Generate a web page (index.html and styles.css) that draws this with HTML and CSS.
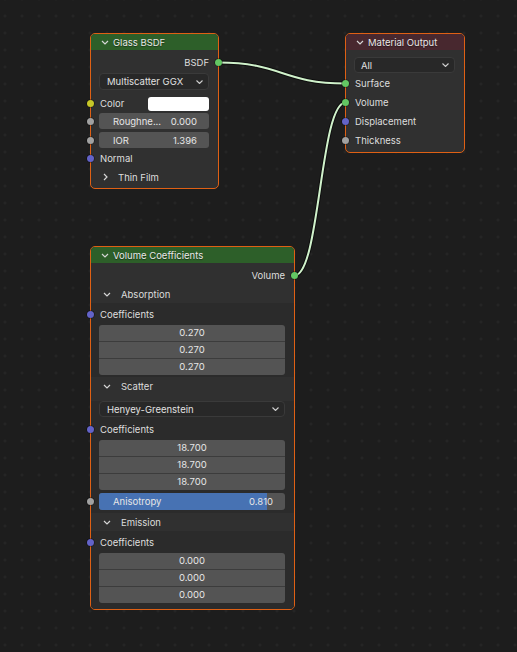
FILE: index.html
```html
<!DOCTYPE html>
<html lang="en">
<head>
    <meta charset="UTF-8">
    <meta name="viewport" content="width=device-width, initial-scale=1.0">
    <title>Shader Editor</title>
    <link rel="stylesheet" href="styles.css">
</head>
<body>
    <div class="canvas">
        <svg class="links" width="517" height="652" viewBox="0 0 517 652">
            <path class="link-shadow" d="M218.5 62.5 C282 62.5 282 83.5 345.5 83.5" />
            <path class="link" d="M218.5 62.5 C282 62.5 282 83.5 345.5 83.5" />
            <path class="link-shadow" d="M294.5 275.5 C320 275.5 320 102.5 345.5 102.5" />
            <path class="link" d="M294.5 275.5 C320 275.5 320 102.5 345.5 102.5" />
        </svg>

        <!-- Glass BSDF -->
        <div class="node node-glass">
            <div class="node-header shader">
                <svg class="chev" width="8" height="5" viewBox="0 0 8 5"><polyline points="1,1 4,4 7,1" /></svg>
                <span>Glass BSDF</span>
            </div>
            <div class="node-body">
                <div class="row row-out">BSDF<span class="socket out green"></span></div>
                <div class="select select-glass"><span>Multiscatter GGX</span><svg width="7" height="4" viewBox="0 0 7 4"><polyline points="0.5,0.5 3.5,3.5 6.5,0.5" /></svg></div>
                <div class="row row-color"><span class="socket yellow"></span>Color<span class="swatch"></span></div>
                <div class="row field-row"><span class="socket gray"></span><div class="field"><span>Roughne...</span><span>0.000</span></div></div>
                <div class="row field-row gap3"><span class="socket gray"></span><div class="field"><span>IOR</span><span>1.396</span></div></div>
                <div class="row row-normal"><span class="socket blue"></span>Normal</div>
                <div class="row row-panel">
                    <svg class="chev" width="5" height="8" viewBox="0 0 5 8"><polyline points="1,1 4,4 1,7" /></svg>
                    <span>Thin Film</span>
                </div>
            </div>
        </div>

        <!-- Material Output -->
        <div class="node node-output">
            <div class="node-header output">
                <svg class="chev" width="8" height="5" viewBox="0 0 8 5"><polyline points="1,1 4,4 7,1" /></svg>
                <span>Material Output</span>
            </div>
            <div class="node-body">
                <div class="select select-output"><span>All</span><svg width="7" height="4" viewBox="0 0 7 4"><polyline points="0.5,0.5 3.5,3.5 6.5,0.5" /></svg></div>
                <div class="row first"><span class="socket green"></span>Surface</div>
                <div class="row"><span class="socket green"></span>Volume</div>
                <div class="row"><span class="socket blue"></span>Displacement</div>
                <div class="row"><span class="socket gray"></span>Thickness</div>
            </div>
        </div>

        <!-- Volume Coefficients -->
        <div class="node node-volume">
            <div class="node-header shader">
                <svg class="chev" width="8" height="5" viewBox="0 0 8 5"><polyline points="1,1 4,4 7,1" /></svg>
                <span>Volume Coefficients</span>
            </div>
            <div class="node-body">
                <div class="row row-out">Volume<span class="socket out green"></span></div>
            </div>

            <div class="panel-header">
                <svg class="chev" width="8" height="5" viewBox="0 0 8 5"><polyline points="1,1 4,4 7,1" /></svg>
                <span>Absorption</span>
            </div>
            <div class="panel">
                <div class="row"><span class="socket blue"></span>Coefficients</div>
                <div class="stack">
                    <div>0.270</div>
                    <div>0.270</div>
                    <div>0.270</div>
                </div>
            </div>

            <div class="panel-header">
                <svg class="chev" width="8" height="5" viewBox="0 0 8 5"><polyline points="1,1 4,4 7,1" /></svg>
                <span>Scatter</span>
            </div>
            <div class="panel panel-scatter">
                <div class="select select-phase"><span>Henyey-Greenstein</span><svg width="7" height="4" viewBox="0 0 7 4"><polyline points="0.5,0.5 3.5,3.5 6.5,0.5" /></svg></div>
                <div class="row gap3"><span class="socket blue"></span>Coefficients</div>
                <div class="stack">
                    <div>18.700</div>
                    <div>18.700</div>
                    <div>18.700</div>
                </div>
                <div class="row field-row aniso"><span class="socket gray"></span>
                    <div class="field slider">
                        <div class="fill" style="width: 90.5%"></div>
                        <span>Anisotropy</span><span>0.810</span>
                    </div>
                </div>
            </div>

            <div class="panel-header">
                <svg class="chev" width="8" height="5" viewBox="0 0 8 5"><polyline points="1,1 4,4 7,1" /></svg>
                <span>Emission</span>
            </div>
            <div class="panel panel-last">
                <div class="row"><span class="socket blue"></span>Coefficients</div>
                <div class="stack">
                    <div>0.000</div>
                    <div>0.000</div>
                    <div>0.000</div>
                </div>
            </div>
        </div>
    </div>
</body>
</html>
```

FILE: styles.css
```css
body {
    margin: 0;
    background: #1d1d1d;
    font-family: Inter, "DejaVu Sans", sans-serif;
    font-size: 9.5px;
    color: #dedede;
}
.canvas {
    position: relative;
    width: 517px;
    height: 652px;
    overflow: hidden;
    background-color: #1d1d1d;
    background-image: radial-gradient(circle, #2a2a2a 0.9px, transparent 1.3px);
    background-size: 17px 17px;
    background-position: -3.5px 7.5px;
}
.links {
    position: absolute;
    left: 0;
    top: 0;
}
.link-shadow {
    fill: none;
    stroke: rgba(0, 0, 0, 0.55);
    stroke-width: 4;
}
.link {
    fill: none;
    stroke: #d0f2cb;
    stroke-width: 2;
}

/* nodes */
.node {
    position: absolute;
    box-sizing: border-box;
    background: #303030;
    border: 1px solid #df6014;
    border-radius: 5px;
}
.node-glass {
    left: 90px;
    top: 33px;
    width: 129px;
}
.node-output {
    left: 345px;
    top: 33px;
    width: 120px;
}
.node-volume {
    left: 90px;
    top: 246px;
    width: 205px;
}
.node-header {
    height: 16px;
    display: flex;
    align-items: center;
    padding-left: 10px;
    border-radius: 4px 4px 0 0;
    color: #e8e8e8;
    text-shadow: 0 1px 1px rgba(0, 0, 0, 0.45);
}
.node-header.shader {
    background: #2d5f29;
}
.node-header.output {
    background: #48282f;
}
.chev {
    fill: none;
    stroke: #d6d6d6;
    stroke-width: 1.2;
    margin-right: 4px;
}
.node-body {
    padding: 3px 0 2px;
}
.node-volume .node-body {
    padding-bottom: 0;
}

/* rows and sockets */
.row {
    position: relative;
    height: 19px;
    display: flex;
    align-items: center;
    padding: 0 9px;
}
.row-out {
    justify-content: flex-end;
}
.socket {
    position: absolute;
    left: -4px;
    top: 50%;
    width: 7px;
    height: 7px;
    margin-top: -3.5px;
    border-radius: 50%;
    box-shadow: 0 0 0 0.5px rgba(0, 0, 0, 0.6);
}
.socket.out {
    left: auto;
    right: -4px;
}
.green { background: #63c763; }
.blue { background: #6363c7; }
.gray { background: #a1a1a1; }
.yellow { background: #c7c729; }

.row-color {
    margin-top: 4px;
}
.swatch {
    margin-left: auto;
    width: 61px;
    height: 14px;
    background: #ffffff;
    border-radius: 3px;
}
.field-row {
    height: 16px;
    padding: 0 9px 0 8px;
}
.gap3 {
    margin-top: 3px;
}
.field {
    position: relative;
    flex: 1;
    height: 16px;
    display: flex;
    align-items: center;
    justify-content: space-between;
    padding: 0 12px 0 14px;
    background: #545454;
    border-radius: 3px;
    color: #e6e6e6;
    overflow: hidden;
}
.field span {
    position: relative;
}
.slider .fill {
    position: absolute;
    left: 0;
    top: 0;
    bottom: 0;
    background: #4772b3;
}
.aniso {
    margin-top: 3px;
    height: 17px;
}
.aniso .field {
    height: 17px;
}
.row-normal {
    margin-top: 1px;
}
.row-panel {
    height: 18px;
    padding-left: 12px;
}
.row-panel .chev {
    margin-right: 10px;
}

/* dropdowns */
.select {
    box-sizing: border-box;
    display: flex;
    align-items: center;
    justify-content: space-between;
    margin: 0 9px 0 8px;
    padding: 0 5px 0 7px;
    height: 17px;
    background: #282828;
    border: 1px solid #3a3a3a;
    border-radius: 4px;
    color: #e0e0e0;
}
.select svg {
    fill: none;
    stroke: #d0d0d0;
    stroke-width: 1.1;
}
.select-glass {
    margin-top: 1px;
}
.select-output {
    margin-top: 4px;
    height: 16px;
    padding-left: 6px;
}
.node-output .row.first {
    margin-top: 1px;
}
.select-phase {
    margin-top: 6px;
    height: 16px;
}

/* panels */
.panel-header {
    height: 18px;
    display: flex;
    align-items: center;
    padding-left: 12px;
    background: #303030;
    color: #dcdcdc;
}
.panel-header .chev {
    margin-right: 10px;
}
.panel {
    background: #2b2b2b;
    padding: 2px 0 2px;
}
.panel-scatter {
    padding-top: 0;
    padding-bottom: 3px;
}
.panel-last {
    padding-bottom: 6px;
    border-radius: 0 0 4px 4px;
}
.stack {
    margin: 1px 9px 0 8px;
    border-radius: 3px;
    overflow: hidden;
    background: #545454;
    color: #e6e6e6;
}
.stack div {
    height: 16px;
    line-height: 16px;
    text-align: center;
}
.stack div + div {
    border-top: 1px solid #3c3c3c;
}
```
